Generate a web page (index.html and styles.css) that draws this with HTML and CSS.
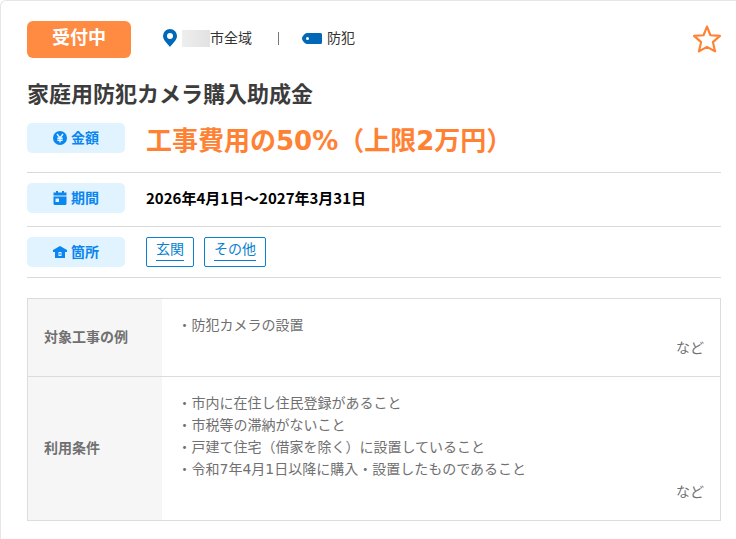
FILE: index.html
```html
<!DOCTYPE html>
<html lang="ja">
<head>
    <meta charset="UTF-8">
    <meta name="viewport" content="width=device-width, initial-scale=1.0">
    <title>家庭用防犯カメラ購入助成金</title>
    <link rel="stylesheet" href="styles.css">
</head>
<body>
    <main class="card">

        <header class="card-header">
            <span class="status">受付中</span>
            <div class="meta">
                <span class="meta-item">
                    <svg class="icon-pin" viewBox="0 0 14 18" aria-hidden="true"><path fill-rule="evenodd" d="M7 0a7 7 0 0 0-7 7c0 4 4 7 7 11 3-4 7-7 7-11a7 7 0 0 0-7-7zm0 4a3 3 0 1 1 0 6 3 3 0 0 1 0-6z"/></svg>
                    <span class="area"><span class="mask"></span>市全域</span>
                </span>
                <span class="separator"></span>
                <span class="meta-item">
                    <svg class="icon-tag" viewBox="0 0 20 11" aria-hidden="true"><path fill-rule="evenodd" d="M5 0h13.500a1.500 1.500 0 0 1 1.500 1.500v8a1.500 1.500 0 0 1-1.500 1.500H5C3 11 0 7.500 0 5.500S3 0 5 0zm.5 4a1.500 1.500 0 1 0 0 3 1.500 1.500 0 0 0 0-3z"/></svg>
                    <span>防犯</span>
                </span>
            </div>
            <button type="button" class="favorite" aria-label="お気に入り">
                <svg viewBox="0 0 26 26" aria-hidden="true"><path d="M13 1.500l3.200 8 8.800.6-6.500 5.800 2 8.600-7.500-4.200-7.500 4.200 2-8.600L1 10.100l8.800-.6z"/></svg>
            </button>
        </header>

        <h1>家庭用防犯カメラ購入助成金</h1>

        <!-- 金額・期間・箇所 -->
        <dl class="summary">
            <div class="summary-row">
                <dt>
                    <svg viewBox="0 0 14 14" aria-hidden="true"><circle cx="7" cy="7" r="7"/><path class="line" d="M4 3l3 4 3-4M7 7v4.500M4.300 7.300h5.400M4.300 9.300h5.400"/></svg>
                    金額
                </dt>
                <dd class="price">工事費用の50%（上限2万円）</dd>
            </div>
            <div class="summary-row">
                <dt>
                    <svg viewBox="0 0 14 14" aria-hidden="true"><path fill-rule="evenodd" d="M3 0h2v1.500h4V0h2v1.500h2.500V4.500H.5v-3H3zM.5 5.500h13V12.500a1.500 1.500 0 0 1-1.500 1.500H2A1.500 1.500 0 0 1 .5 12.500zM2.500 7.500v3.500H6V7.500z"/></svg>
                    期間
                </dt>
                <dd class="period">2026年4月1日～2027年3月31日</dd>
            </div>
            <div class="summary-row">
                <dt>
                    <svg viewBox="0 0 14 14" aria-hidden="true"><path fill-rule="evenodd" d="M7 1l7 4v2h-2v6H2V7H0V5zM5.500 7v4h3V7z"/><path d="M6.500 8h1v2h-1z"/></svg>
                    箇所
                </dt>
                <dd class="places">
                    <a href="#"><span>玄関</span></a>
                    <a href="#"><span>その他</span></a>
                </dd>
            </div>
        </dl>

        <!-- 詳細 -->
        <table class="detail">
            <tr>
                <th scope="row">対象工事の例</th>
                <td>
                    <ul>
                        <li>防犯カメラの設置</li>
                    </ul>
                    <p>など</p>
                </td>
            </tr>
            <tr>
                <th scope="row">利用条件</th>
                <td>
                    <ul>
                        <li>市内に在住し住民登録があること</li>
                        <li>市税等の滞納がないこと</li>
                        <li>戸建て住宅（借家を除く）に設置していること</li>
                        <li>令和7年4月1日以降に購入・設置したものであること</li>
                    </ul>
                    <p>など</p>
                </td>
            </tr>
        </table>

    </main>
</body>
</html>
```

FILE: styles.css
```css
* {
    box-sizing: border-box;
}
body {
    margin: 0;
    background-color: #fff;
    color: #333;
    font-family: "DejaVu Sans", "Noto Sans CJK JP", sans-serif;
    font-size: 14px;
    line-height: 22px;
}
h1, dl, dd, ul, p {
    margin: 0;
    padding: 0;
}
.card {
    min-height: 100vh;
    padding: 20px 15px 17px 26px;
    border-top: 1px solid #e6e6e6;
    border-left: 1px solid #e6e6e6;
    border-top-left-radius: 6px;
}

/* ヘッダー */
.card-header {
    display: flex;
    align-items: flex-start;
}
.status {
    width: 104px;
    padding: 4px 0 7px;
    border-radius: 6px;
    background-color: #ff8a42;
    color: #fff;
    font-size: 18px;
    font-weight: bold;
    line-height: 26px;
    text-align: center;
}
.meta {
    display: flex;
    align-items: center;
    margin-left: 32px;
    padding-top: 6px;
}
.meta-item {
    display: flex;
    align-items: center;
    gap: 5px;
}
.meta svg {
    fill: #0068b7;
}
.icon-pin {
    width: 14px;
    height: 18px;
}
.icon-tag {
    width: 20px;
    height: 11px;
}
.area {
    display: flex;
    align-items: center;
}
.mask {
    width: 28px;
    height: 17px;
    background: linear-gradient(to right, #eee, #e2e2e2);
}
.separator {
    width: 1px;
    height: 13px;
    margin: 0 23px 0 26px;
    background-color: #777;
}
.favorite {
    width: 28px;
    height: 28px;
    margin-top: 4px;
    margin-left: auto;
    padding: 0;
    border: none;
    background: none;
    cursor: pointer;
}
.favorite svg {
    display: block;
    fill: none;
    stroke: #ff8133;
    stroke-width: 2;
    stroke-linejoin: round;
}
h1 {
    margin-top: 21px;
    color: #3c3c3c;
    font-size: 22px;
    line-height: 32px;
}

/* 金額・期間・箇所 */
.summary {
    margin-top: 12px;
}
.summary-row {
    display: flex;
    align-items: flex-start;
    gap: 21px;
    padding-bottom: 13px;
    border-bottom: 1px solid #d9d9d9;
}
.summary-row + .summary-row {
    padding-top: 10px;
}
.summary-row:last-child {
    padding-bottom: 10px;
}
.summary dt {
    display: flex;
    align-items: center;
    justify-content: center;
    gap: 4px;
    width: 98px;
    height: 30px;
    border-radius: 5px;
    background-color: #e0f3ff;
    color: #0a86f0;
    font-weight: bold;
}
.summary dt svg {
    width: 14px;
    height: 14px;
    fill: #0a86f0;
}
.summary dt .line {
    fill: none;
    stroke: #e0f3ff;
    stroke-width: 1.4;
}
.price {
    color: #ff8133;
    font-size: 26px;
    font-weight: bold;
    line-height: 36px;
}
.period {
    color: #000;
    font-family: "Noto Sans CJK JP", sans-serif;
    font-size: 15px;
    font-weight: bold;
    line-height: 30px;
}
.places {
    display: flex;
    gap: 10px;
}
.places a {
    height: 30px;
    padding: 0 9px;
    border: 1px solid #0a7fd0;
    border-radius: 2px;
    color: #0a7fd0;
    text-decoration: none;
}
.places span {
    display: block;
    border-bottom: 1px solid #0a7fd0;
}

/* 詳細テーブル */
.detail {
    width: 100%;
    margin-top: 20px;
    border-collapse: collapse;
    border: 1px solid #dcdcdc;
    color: #707070;
}
.detail tr + tr {
    border-top: 1px solid #dcdcdc;
}
.detail th {
    width: 134px;
    padding: 0 16px 2px;
    background-color: #f6f6f6;
    text-align: left;
}
.detail td {
    padding: 15px 16px 17px;
}
.detail ul {
    list-style: none;
}
.detail li::before {
    content: "・";
}
.detail p {
    margin-top: 1px;
    text-align: right;
}
```
